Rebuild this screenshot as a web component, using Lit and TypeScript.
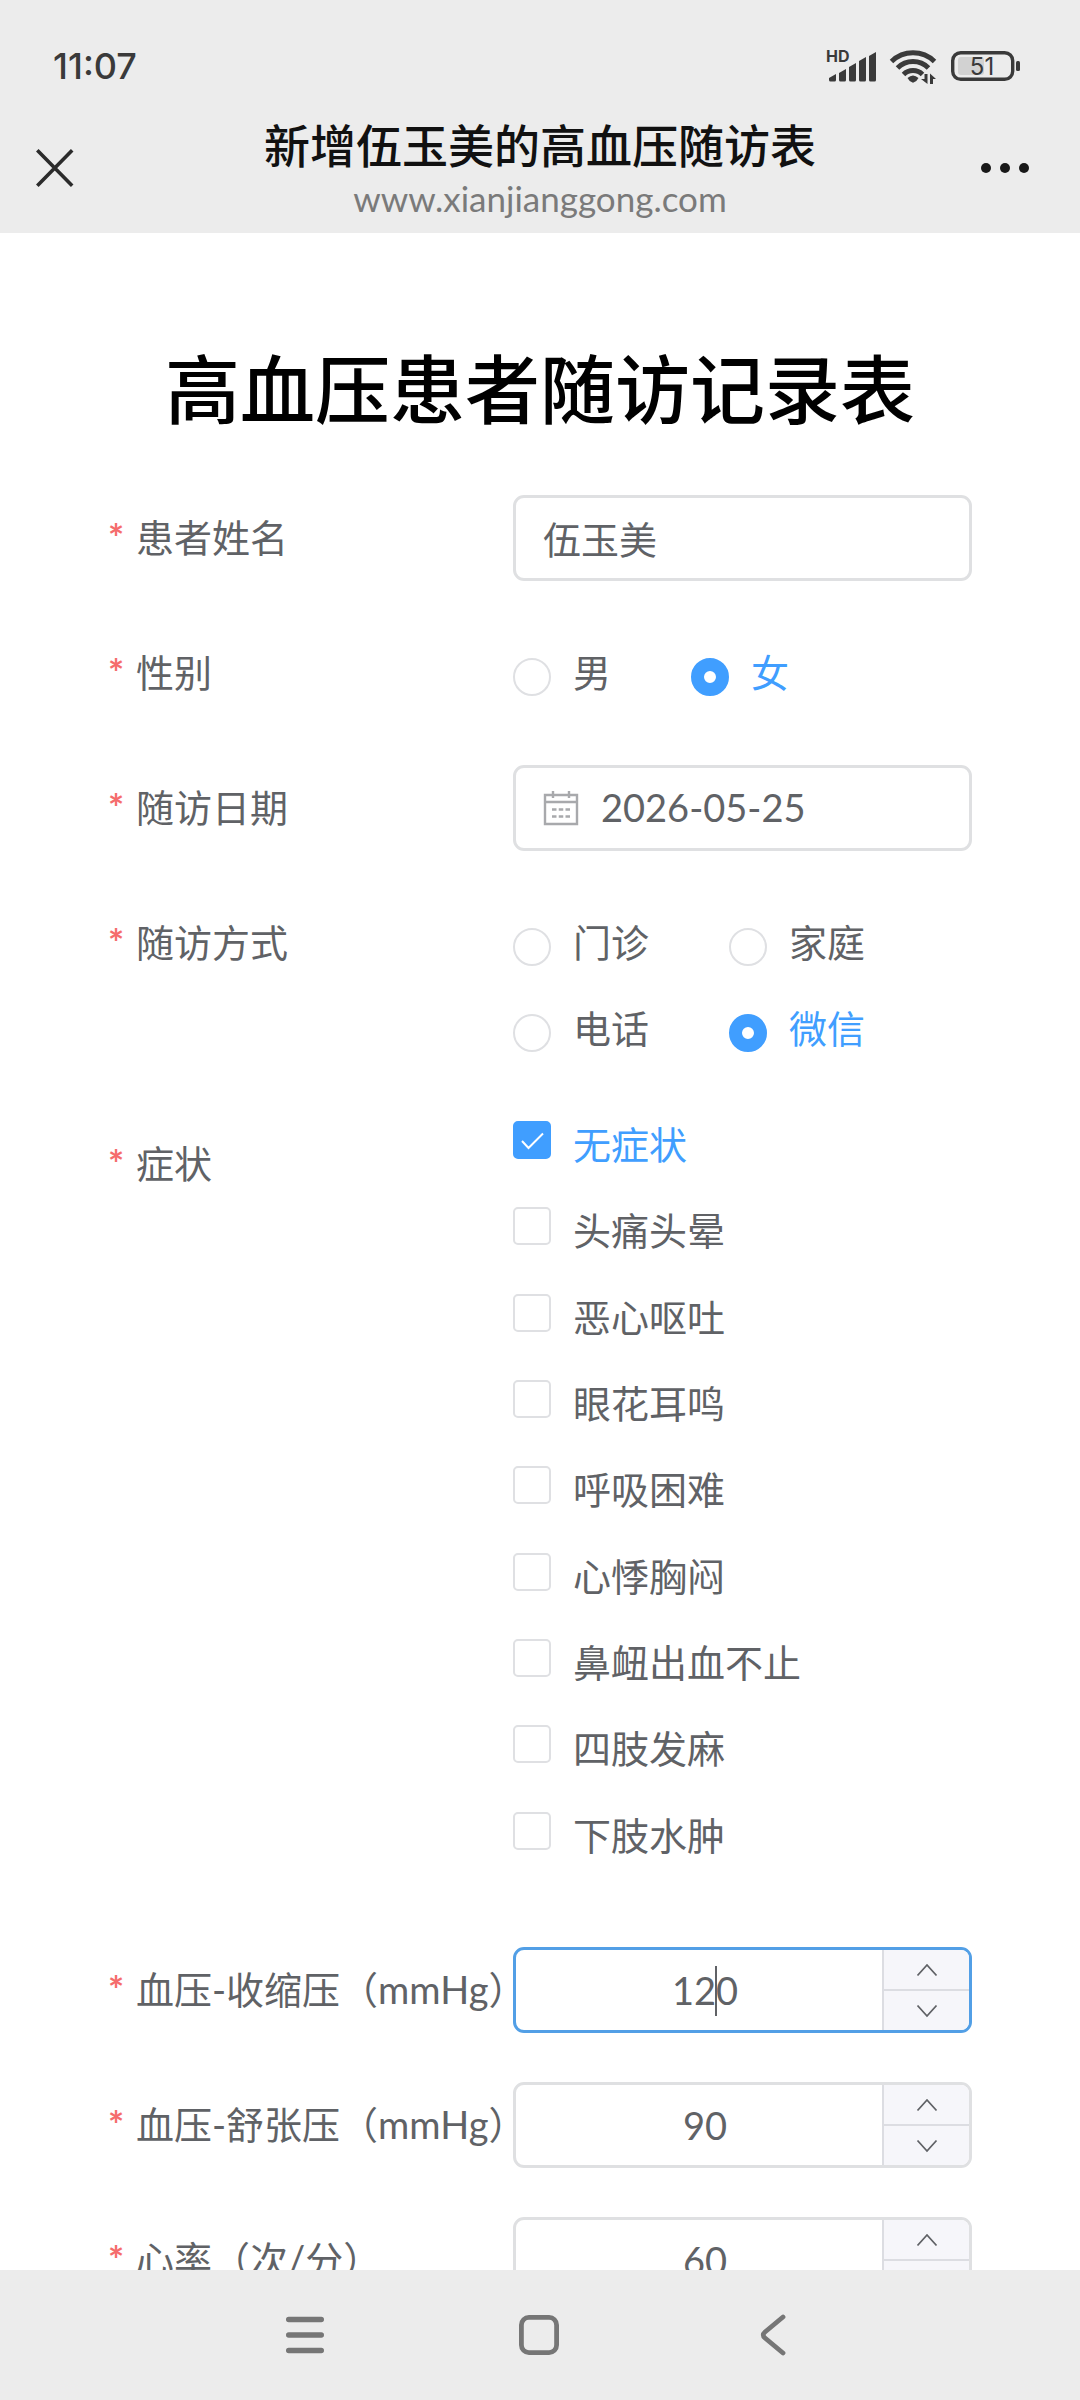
import { LitElement, html, css, svg, nothing } from "lit";
import { customElement, property, state } from "lit/decorators.js";

const fontStack = css`"Lato", "Noto Sans CJK SC", sans-serif`;

@customElement("status-bar")
export class StatusBar extends LitElement {
  static styles = css`
    :host {
      display: flex;
      align-items: center;
      justify-content: space-between;
      padding: 44px 60px 0 53px;
      color: #3a3a3a;
      font-family: ${fontStack};
    }
    .time {
      font-family: "Inter", sans-serif;
      font-size: 36px;
      line-height: 44px;
      font-weight: 500;
    }
    .icons {
      display: block;
      width: 194px;
      height: 44px;
    }
    .hd {
      font: 700 16px "Inter", sans-serif;
    }
    .level {
      font: 400 24px "Inter", sans-serif;
    }
  `;

  render() {
    const bars = [30, 25, 19, 13, 8];
    return html`
      <span class="time">11:07</span>
      <svg class="icons" viewBox="0 0 194 44" fill="#3a3a3a" role="img" aria-label="信号、无线网络、电量 51">
        <text class="hd" x="0" y="18">HD</text>
        ${bars.map((top, i) => {
          const x = 3 + i * 10;
          return svg`<path d="M${x} ${top + 4} L${x + 7} ${top} V36 a1.5 1.5 0 0 1 -1.5 1.5 H${x + 1.5} a1.5 1.5 0 0 1 -1.5 -1.5 Z" />`;
        })}
        <g fill="none" stroke="#3a3a3a" stroke-width="5">
          <path d="M65.500 17.500 A31 31 0 0 1 108.500 17.500" />
          <path d="M71.500 24 A22 22 0 0 1 102.500 24" />
          <path d="M77.500 30.500 A13.500 13.500 0 0 1 96.500 30.500" />
        </g>
        <path d="M81.500 34 Q87 29 92.500 34 Q91 37.500 87 38.800 Q83 37.500 81.500 34 Z" />
        <path d="M98.500 30 h3 v10 l-6.500 -5 h3.500 Z M104 40 V29.500 l6 5.500 h-3 v5 Z" />
        <rect x="132" y="13" width="26" height="18" rx="3" fill="#d2d2d2" />
        <rect x="126.700" y="8.700" width="60" height="26.600" rx="8" fill="none" stroke="#3a3a3a" stroke-width="3.400" />
        <rect x="190" y="17" width="4" height="10" rx="1.500" />
        <text class="level" x="156" y="31" text-anchor="middle">51</text>
      </svg>
    `;
  }
}

@customElement("title-bar")
export class TitleBar extends LitElement {
  static styles = css`
    :host {
      display: grid;
      grid-template-columns: 1fr auto 1fr;
      align-items: center;
      padding: 15px 0 0;
      min-height: 130px;
      font-family: ${fontStack};
    }
    button {
      display: flex;
      margin: 0;
      padding: 12px 36px;
      border: 0;
      background: none;
      cursor: pointer;
    }
    .more {
      justify-self: end;
      padding: 12px 50px;
    }
    .heading {
      padding-top: 8px;
      text-align: center;
    }
    .title {
      margin: 0;
      color: #111;
      font-size: 46px;
      line-height: 52px;
      font-weight: 500;
    }
    .site {
      margin: 0;
      color: #7a7a7a;
      font-size: 35px;
      line-height: 52px;
    }
  `;

  render() {
    return html`
      <button type="button" aria-label="关闭">
        <svg width="38" height="38" viewBox="0 0 38 38" fill="none" stroke="#2b2b2b" stroke-width="3.600">
          <path d="M1.300 1.300 L36.200 36.700 M36.200 1.300 L1.300 36.700" />
        </svg>
      </button>
      <div class="heading">
        <p class="title">新增伍玉美的高血压随访表</p>
        <p class="site">www.xianjianggong.com</p>
      </div>
      <button type="button" class="more" aria-label="更多">
        <svg width="50" height="12" viewBox="0 0 50 12" fill="#181818">
          <circle cx="6" cy="6" r="5" /><circle cx="25" cy="6" r="5" /><circle cx="44" cy="6" r="5" />
        </svg>
      </button>
    `;
  }
}

@customElement("number-field")
export class NumberField extends LitElement {
  @property() label = "";
  @property({ type: Number }) value = 0;
  @property({ type: Boolean, reflect: true }) active = false;

  static styles = css`
    :host {
      display: block;
      font-family: ${fontStack};
    }
    .box {
      position: relative;
      display: flex;
      box-sizing: border-box;
      height: 86px;
      border: 3px solid #dfe0e2;
      border-radius: 11px;
      overflow: hidden;
      background: #fff;
    }
    :host([active]) .box {
      border-color: #529fe6;
    }
    input {
      flex: 1;
      min-width: 0;
      margin: 0;
      padding: 0 0 0 12px;
      border: 0;
      outline: 0;
      background: none;
      color: #606266;
      font: inherit;
      font-size: 38px;
      text-align: center;
    }
    .caret {
      position: absolute;
      left: 199px;
      top: 16px;
      width: 2px;
      height: 50px;
      background: #606266;
    }
    .steps {
      display: flex;
      flex-direction: column;
      width: 85px;
      border-left: 2px solid #dcdde2;
    }
    button {
      flex: 1;
      display: flex;
      align-items: center;
      justify-content: center;
      margin: 0;
      padding: 0;
      border: 0;
      background: #f6f6fa;
      cursor: pointer;
    }
    button + button {
      border-top: 2px solid #dcdde2;
    }
  `;

  private step(by: number) {
    this.value += by;
  }

  render() {
    return html`
      <div class="box">
        <input
          type="text"
          inputmode="numeric"
          aria-label=${this.label}
          .value=${String(this.value)}
          @change=${(e: Event) => (this.value = Number((e.target as HTMLInputElement).value))}
        />
        ${this.active ? html`<span class="caret"></span>` : nothing}
        <div class="steps">
          <button type="button" aria-label="增加" @click=${() => this.step(1)}>
            <svg width="22" height="14" viewBox="0 0 22 14" fill="none" stroke="#606266" stroke-width="1.800">
              <path d="M1.500 12.500 L11 2 L20.500 12.500" />
            </svg>
          </button>
          <button type="button" aria-label="减少" @click=${() => this.step(-1)}>
            <svg width="22" height="14" viewBox="0 0 22 14" fill="none" stroke="#606266" stroke-width="1.800">
              <path d="M1.500 1.500 L11 12 L20.500 1.500" />
            </svg>
          </button>
        </div>
      </div>
    `;
  }
}

@customElement("follow-up-form")
export class FollowUpForm extends LitElement {
  @state() private gender = "女";
  @state() private way = "微信";
  @state() private symptoms = new Set(["无症状"]);

  static styles = css`
    :host {
      display: block;
      padding: 110px 108px 49px;
      color: #606266;
      font-family: ${fontStack};
      font-size: 38px;
    }
    h1 {
      margin: 0 0 60px;
      color: #000;
      font-size: 75px;
      line-height: 92px;
      font-weight: 500;
      text-align: center;
    }
    form {
      display: grid;
      gap: 49px;
    }
    .row {
      display: grid;
      grid-template-columns: 405px minmax(0, 1fr);
      margin: 0;
      padding: 0;
      border: 0;
    }
    .label {
      display: flex;
      height: 84px;
      line-height: 84px;
      white-space: nowrap;
    }
    .star {
      flex: none;
      width: 28px;
      color: #f56c6c;
      font-weight: 700;
    }
    .field {
      display: flex;
      align-items: center;
      gap: 22px;
      box-sizing: border-box;
      height: 86px;
      padding: 0 27px;
      border: 3px solid #dfe0e2;
      border-radius: 11px;
      background: #fff;
    }
    .field input {
      flex: 1;
      min-width: 0;
      margin: 0;
      padding: 0 0 2px;
      border: 0;
      outline: 0;
      background: none;
      color: inherit;
      font: inherit;
    }
    .radios {
      display: grid;
      grid-template-columns: max-content max-content;
      grid-auto-rows: 86px;
      column-gap: 80px;
    }
    .checks {
      display: grid;
      grid-auto-rows: 1fr;
      min-height: 777px;
    }
    .option {
      display: flex;
      align-items: flex-start;
      justify-self: start;
      gap: 22px;
      cursor: pointer;
    }
    .option.on {
      color: #409eff;
    }
    .option input {
      appearance: none;
      flex: none;
      box-sizing: border-box;
      width: 38px;
      height: 38px;
      margin: 0;
      border: 2px solid #dfe0e3;
      background: #fff;
    }
    .radio {
      line-height: 84px;
    }
    .radio input {
      margin-top: 28px;
      border-radius: 50%;
    }
    .radio input:checked {
      border: 13px solid #409eff;
    }
    .check {
      line-height: 46px;
    }
    .check input {
      border-radius: 5px;
    }
    .check input:checked {
      border-color: #409eff;
      background: #409eff;
    }
    .mark {
      display: grid;
    }
    .mark > * {
      grid-area: 1 / 1;
    }
    .mark svg {
      pointer-events: none;
    }
  `;

  private label(text: string, id: string) {
    return html`<label class="label" for=${id}><span class="star" aria-hidden="true">*</span>${text}</label>`;
  }

  private radios(name: string, options: string[], current: string, pick: (v: string) => void) {
    return html`<div class="radios">
      ${options.map(
        (o) => html`<label class="option radio ${o === current ? "on" : ""}">
          <input type="radio" name=${name} .checked=${o === current} @change=${() => pick(o)} />${o}
        </label>`,
      )}
    </div>`;
  }

  private toggle(name: string) {
    const next = new Set(this.symptoms);
    next.has(name) ? next.delete(name) : next.add(name);
    this.symptoms = next;
  }

  render() {
    const symptoms = ["无症状", "头痛头晕", "恶心呕吐", "眼花耳鸣", "呼吸困难", "心悸胸闷", "鼻衄出血不止", "四肢发麻", "下肢水肿"];
    const numbers = [
      { label: "血压-收缩压（mmHg）", value: 120, active: true },
      { label: "血压-舒张压（mmHg）", value: 90, active: false },
      { label: "心率（次/分）", value: 60, active: false },
    ];
    return html`
      <h1>高血压患者随访记录表</h1>
      <form>
        <div class="row">
          ${this.label("患者姓名", "name")}
          <div class="field"><input id="name" type="text" value="伍玉美" /></div>
        </div>
        <div class="row" role="radiogroup" aria-label="性别">
          <span class="label"><span class="star" aria-hidden="true">*</span>性别</span>
          ${this.radios("gender", ["男", "女"], this.gender, (v) => (this.gender = v))}
        </div>
        <div class="row">
          ${this.label("随访日期", "date")}
          <div class="field">
            <svg width="36" height="36" viewBox="0 0 36 36" fill="none" stroke="#a8a9ac" stroke-width="2.400">
              <path d="M2 5 H34 V34 H2 Z M2 12 H34 M10 1 V8 M26 1 V8" />
              <path d="M9 19.500 H27 M9 26.500 H27" stroke-dasharray="4.500 2.250" />
            </svg>
            <input id="date" type="text" value="2026-05-25" />
          </div>
        </div>
        <div class="row" role="radiogroup" aria-label="随访方式">
          <span class="label"><span class="star" aria-hidden="true">*</span>随访方式</span>
          ${this.radios("way", ["门诊", "家庭", "电话", "微信"], this.way, (v) => (this.way = v))}
        </div>
        <div class="row" role="group" aria-label="症状">
          <span class="label"><span class="star" aria-hidden="true">*</span>症状</span>
          <div class="checks">
            ${symptoms.map((s) => {
              const on = this.symptoms.has(s);
              return html`<label class="option check ${on ? "on" : ""}">
                <span class="mark">
                  <input type="checkbox" .checked=${on} @change=${() => this.toggle(s)} />
                  ${on
                    ? html`<svg width="38" height="38" viewBox="0 0 38 38" fill="none" stroke="#fff" stroke-width="2">
                        <path d="M9 20 L15.500 27 L30 12.500" />
                      </svg>`
                    : nothing}
                </span>
                ${s}
              </label>`;
            })}
          </div>
        </div>
        ${numbers.map(
          (n) => html`<div class="row">
            <span class="label"><span class="star" aria-hidden="true">*</span>${n.label}</span>
            <number-field label=${n.label} .value=${n.value} ?active=${n.active}></number-field>
          </div>`,
        )}
      </form>
    `;
  }
}

@customElement("system-nav")
export class SystemNav extends LitElement {
  static styles = css`
    :host {
      display: grid;
      grid-template-columns: repeat(3, 234px);
      justify-content: center;
      height: 130px;
      background: #ececec;
    }
    button {
      display: flex;
      align-items: center;
      justify-content: center;
      margin: 0;
      padding: 0;
      border: 0;
      background: none;
      cursor: pointer;
    }
  `;

  render() {
    return html`
      <button type="button" aria-label="最近任务">
        <svg width="44" height="44" viewBox="0 0 44 44" stroke="#767676" stroke-width="5.400" stroke-linecap="round">
          <path d="M4.700 6.500 H37.300 M4.700 22 H37.300 M4.700 37.500 H37.300" />
        </svg>
      </button>
      <button type="button" aria-label="主屏幕">
        <svg width="44" height="44" viewBox="0 0 44 44" fill="none" stroke="#767676" stroke-width="4.800">
          <rect x="3.400" y="4.400" width="35.200" height="35.200" rx="7.500" />
        </svg>
      </button>
      <button type="button" aria-label="返回">
        <svg width="44" height="44" viewBox="0 0 44 44" fill="none" stroke="#767676" stroke-width="4.800" stroke-linecap="round">
          <path d="M31 4 L13 19 Q9.500 22 13 25 L31 40" />
        </svg>
      </button>
    `;
  }
}

@customElement("app-root")
export class AppRoot extends LitElement {
  static styles = css`
    :host {
      display: flex;
      flex-direction: column;
      height: 100vh;
      background: #fff;
    }
    header {
      background: #ececec;
    }
    main {
      flex: 1;
      min-height: 0;
      overflow-y: auto;
      scrollbar-width: none;
    }
  `;

  render() {
    return html`
      <header>
        <status-bar></status-bar>
        <title-bar></title-bar>
      </header>
      <main><follow-up-form></follow-up-form></main>
      <system-nav></system-nav>
    `;
  }
}
